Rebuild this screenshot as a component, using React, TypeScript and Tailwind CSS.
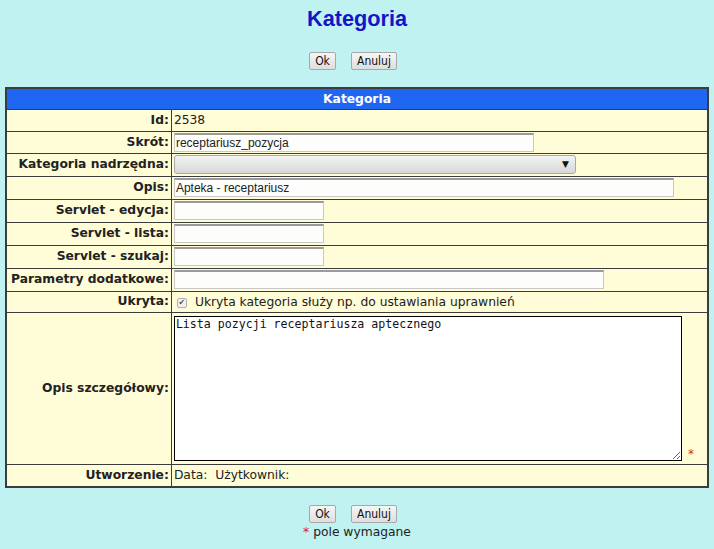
import React from "react";

const label = "border border-[#3c3c3c] text-right font-bold pr-[2px] pl-[4px] whitespace-nowrap";
const cell = "border border-[#3c3c3c] pl-[2px] text-left";
const inp =
  "block h-[19px] bg-[#fdfdfb] border border-[#c8c8c8] border-t-2 border-t-[#9a9a9a] px-[1px] text-[12px] [font-family:'Liberation_Sans',Arial,sans-serif] text-[#222] outline-none";

function Btn({ children, w }: { children: React.ReactNode; w: string }) {
  return (
    <button
      type="button"
      className={`${w} h-[18px] rounded-[2px] border border-[#a8a8a8] bg-gradient-to-b from-[#f6f6f6] to-[#dedede] text-[12px] leading-none text-[#111] [font-family:'DejaVu_Sans_Condensed','DejaVu_Sans',sans-serif]`}
    >
      {children}
    </button>
  );
}

function Buttons() {
  return (
    <div className="flex justify-center gap-[15px] pr-[8px]">
      <Btn w="w-[27px]">Ok</Btn>
      <Btn w="w-[46px]">Anuluj</Btn>
    </div>
  );
}

export default function App() {
  return (
    <div className="min-h-[549px] bg-[#bff2f1] pt-[7px] text-[12.3px] text-[#222] [font-family:'DejaVu_Sans',sans-serif]">
      <h1 className="text-center text-[21.7px] font-bold leading-[24px] text-[#1414c8] [font-family:'Liberation_Sans',Arial,sans-serif]">
        Kategoria
      </h1>
      <div className="mt-[21px]">
        <Buttons />
      </div>
      <table className="mx-[5px] mt-[17px] w-[704px] border-collapse border-2 border-[#3c3c3c] bg-[#fffcd8]">
        <tbody>
          <tr className="h-[21px] bg-[#1f66f0]">
            <th colSpan={2} className="border border-[#3c3c3c] text-center font-bold text-white">
              Kategoria
            </th>
          </tr>
          <tr className="h-[22px]">
            <td className={`${label} w-[164px]`}>Id:</td>
            <td className={cell}>2538</td>
          </tr>
          <tr className="h-[22px]">
            <td className={label}>Skrót:</td>
            <td className={cell}>
              <input className={`${inp} w-[360px]`} defaultValue="receptariusz_pozycja" />
            </td>
          </tr>
          <tr className="h-[23px]">
            <td className={label}>Kategoria nadrzędna:</td>
            <td className={cell}>
              <div className="flex h-[19px] w-[402px] items-center justify-end rounded-[3px] border border-[#a8a8a8] bg-gradient-to-b from-[#f4f4f4] to-[#d8d8d8] pr-[6px] text-[9px] text-[#111]">
                ▼
              </div>
            </td>
          </tr>
          <tr className="h-[23px]">
            <td className={label}>Opis:</td>
            <td className={cell}>
              <input className={`${inp} w-[500px]`} defaultValue="Apteka - receptariusz" />
            </td>
          </tr>
          <tr className="h-[23px]">
            <td className={label}>Servlet - edycja:</td>
            <td className={cell}>
              <input className={`${inp} w-[150px]`} defaultValue="" />
            </td>
          </tr>
          <tr className="h-[23px]">
            <td className={label}>Servlet - lista:</td>
            <td className={cell}>
              <input className={`${inp} w-[150px]`} defaultValue="" />
            </td>
          </tr>
          <tr className="h-[23px]">
            <td className={label}>Servlet - szukaj:</td>
            <td className={cell}>
              <input className={`${inp} w-[150px]`} defaultValue="" />
            </td>
          </tr>
          <tr className="h-[23px]">
            <td className={label}>Parametry dodatkowe:</td>
            <td className={cell}>
              <input className={`${inp} w-[430px]`} defaultValue="" />
            </td>
          </tr>
          <tr className="h-[21px]">
            <td className={label}>Ukryta:</td>
            <td className={cell}>
              <span className="inline-flex items-center">
                <span className="ml-[3px] mr-[8px] flex h-[10px] w-[10px] items-center justify-center rounded-[2px] border border-[#b0b0b0] bg-[#f0f0f0] text-[8px] leading-none text-[#555]">
                  ✔
                </span>
                Ukryta kategoria służy np. do ustawiania uprawnień
              </span>
            </td>
          </tr>
          <tr className="h-[152px]">
            <td className={label}>Opis szczegółowy:</td>
            <td className={cell}>
              <div className="flex items-end">
                <textarea
                  className="mt-[1px] block h-[145px] w-[508px] resize border border-black bg-white px-[1px] text-[11.6px] leading-[14px] text-[#111] outline-none [font-family:'DejaVu_Sans_Mono',monospace]"
                  defaultValue="Lista pozycji receptariusza aptecznego"
                />
                <span className="ml-[6px] text-[12px] leading-[14px] text-[#cc3322]">*</span>
              </div>
            </td>
          </tr>
          <tr className="h-[23px]">
            <td className={label}>Utworzenie:</td>
            <td className={cell}>Data:&nbsp; Użytkownik:</td>
          </tr>
        </tbody>
      </table>
      <div className="mt-[17px]">
        <Buttons />
      </div>
      <p className="mt-[1px] text-center leading-[16px]">
        <span className="text-[#e02020]">*</span> pole wymagane
      </p>
    </div>
  );
}
